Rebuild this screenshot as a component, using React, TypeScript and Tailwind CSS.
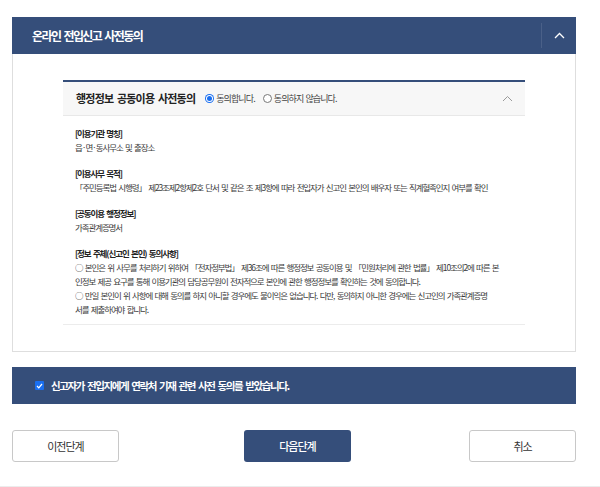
import React from "react";

function Radio({ checked }: { checked?: boolean }) {
  return checked ? (
    <span className="w-[9px] h-[9px] rounded-full bg-[#1a6ff0] flex items-center justify-center shrink-0">
      <span className="w-[5px] h-[5px] rounded-full bg-[#1a6ff0] ring-1 ring-white" />
    </span>
  ) : (
    <span className="w-[9px] h-[9px] rounded-full border border-[#777] bg-white shrink-0" />
  );
}

function Block({ label, lines, last }: { label: string; lines: string[]; last?: boolean }) {
  return (
    <div className={last ? "" : "mb-[12px]"}>
      <p className="font-bold text-[#222]">{label}</p>
      {lines.map((l, i) => (
        <p key={i} className="whitespace-nowrap">
          {l}
        </p>
      ))}
    </div>
  );
}

export default function App() {
  return (
    <div className="w-[600px] h-[487px] bg-white flex flex-col font-['Noto_Sans_CJK_KR','Noto_Sans',sans-serif] text-[#333]">
      <div className="pl-[12px] pr-[24px] pt-[17px] flex flex-col">
        {/* top header */}
        <div className="h-[37px] bg-[#354e7a] flex items-center">
          <h2 className="flex-1 pl-[20px] text-white text-[12px] font-bold tracking-[-1.6px] [word-spacing:2px]">
            온라인 전입신고 사전동의
          </h2>
          <div className="h-[25px] w-[35px] border-l border-[#4a6088] flex items-center justify-center">
            <svg width="11" height="7" viewBox="0 0 11 7">
              <polyline points="1,6 5.5,1.5 10,6" fill="none" stroke="white" strokeWidth="1.3" />
            </svg>
          </div>
        </div>

        {/* content box */}
        <div className="border border-t-0 border-[#dedede] px-[50px] pt-[26px] pb-[26px]">
          <div className="border-t-2 border-[#354e7a] border-b border-b-[#ececec]">
            <div className="h-[34px] bg-[#f7f7f7] border-b border-[#e8e8e8] flex items-center pl-[13px] pr-[12px]">
              <h3 className="text-[11px] font-bold text-[#222] tracking-[-0.8px] [word-spacing:2px]">
                행정정보 공동이용 사전동의
              </h3>
              <label className="ml-[10px] flex items-center gap-[2px] text-[9px] tracking-[-0.9px] text-[#444]">
                <Radio checked />
                <span>동의합니다.</span>
              </label>
              <label className="ml-[8px] flex items-center gap-[2px] text-[9px] tracking-[-0.9px] [word-spacing:1px] text-[#444]">
                <Radio />
                <span>동의하지 않습니다.</span>
              </label>
              <svg className="ml-auto" width="11" height="7" viewBox="0 0 11 7">
                <polyline points="1,6 5.5,1.5 10,6" fill="none" stroke="#9a9a9a" strokeWidth="1" />
              </svg>
            </div>
            <div className="px-[12px] pt-[10px] pb-[8px] text-[8.5px] leading-[14px] tracking-[-1.1px] [word-spacing:1.5px] text-[#3a3a3a]">
              <Block label="[이용기관 명칭]" lines={["읍·면·동사무소 및 출장소"]} />
              <Block
                label="[이용사무 목적]"
                lines={["「주민등록법 시행령」 제23조제2항제2호 단서 및 같은 조 제3항에 따라 전입자가 신고인 본인의 배우자 또는 직계혈족인지 여부를 확인"]}
              />
              <Block label="[공동이용 행정정보]" lines={["가족관계증명서"]} />
              <Block
                last
                label="[정보 주체(신고인 본인) 동의사항]"
                lines={[
                  "○ 본인은 위 사무를 처리하기 위하여 「전자정부법」 제36조에 따른 행정정보 공동이용 및 「민원처리에 관한 법률」 제10조의2에 따른 본",
                  "인정보 제공 요구를 통해 이용기관의 담당공무원이 전자적으로 본인에 관한 행정정보를 확인하는 것에 동의합니다.",
                  "○ 만일 본인이 위 사항에 대해 동의를 하지 아니할 경우에도 불이익은 없습니다. 다만, 동의하지 아니한 경우에는 신고인의 가족관계증명",
                  "서를 제출하여야 합니다.",
                ]}
              />
            </div>
          </div>
        </div>

        {/* agreement bar */}
        <div className="mt-[15px] h-[37px] bg-[#354e7a] flex items-center pl-[23px] gap-[7px]">
          <span className="w-[9px] h-[9px] rounded-[1px] bg-[#1a6ff0] flex items-center justify-center shrink-0">
            <svg width="7" height="6" viewBox="0 0 7 6">
              <polyline points="1,3 2.8,4.8 6,1" fill="none" stroke="white" strokeWidth="1.2" />
            </svg>
          </span>
          <span className="text-white text-[10.5px] font-bold tracking-[-1.4px] [word-spacing:2px]">
            신고자가 전입지에게 연락처 기재 관련 사전 동의를 받았습니다.
          </span>
        </div>

        {/* buttons */}
        <div className="mt-[26px] flex">
          <button className="w-[107px] h-[32px] border border-[#c8c8c8] rounded-[3px] bg-white text-[11px] tracking-[-1px] text-[#333]">
            이전단계
          </button>
          <button className="ml-[125px] w-[107px] h-[32px] rounded-[3px] bg-[#354e7a] text-[11px] tracking-[-1px] text-white font-medium">
            다음단계
          </button>
          <button className="ml-auto w-[107px] h-[32px] border border-[#c8c8c8] rounded-[3px] bg-white text-[11px] tracking-[-1px] text-[#333]">
            취소
          </button>
        </div>
      </div>
      <div className="flex-1" />
      <div className="h-px bg-[#ececec]" />
    </div>
  );
}
